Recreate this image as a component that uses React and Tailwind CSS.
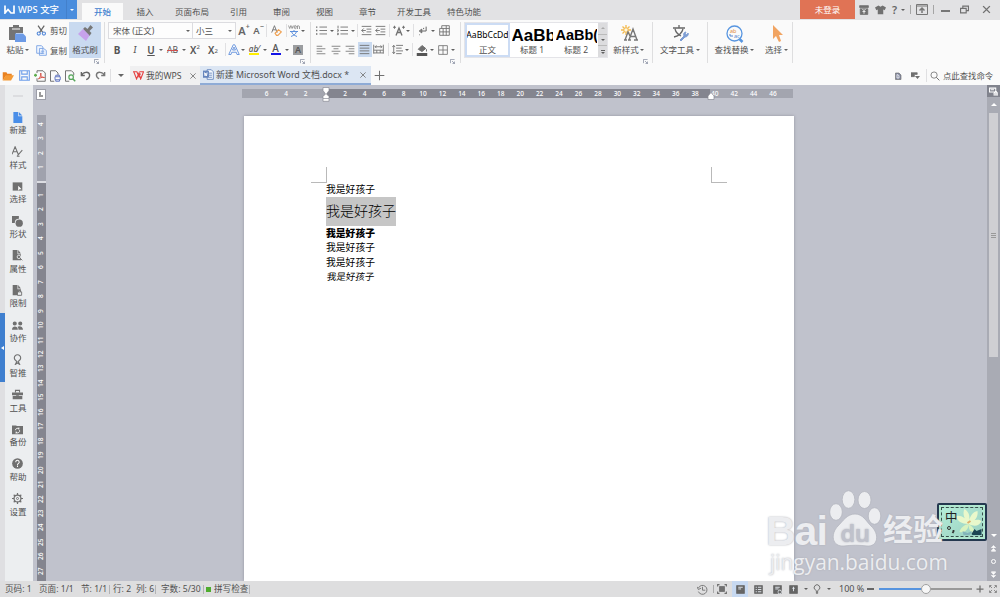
import React from 'react';

const menuTabs = [
  { name: '开始', width: 'w-[41px]', active: true },
  { name: '插入', width: 'w-[44px]' },
  { name: '页面布局', width: 'w-[50px]' },
  { name: '引用', width: 'w-[43px]' },
  { name: '审阅', width: 'w-[43px]' },
  { name: '视图', width: 'w-[43px]' },
  { name: '章节', width: 'w-[43px]' },
  { name: '开发工具', width: 'w-[50px]' },
  { name: '特色功能', width: 'w-[50px]' },
];

function Icon({ size = 14, className = 'text-[#707070]', children }) {
  return (
    <svg
      width={size}
      height={size}
      viewBox="0 0 16 16"
      fill="none"
      stroke="currentColor"
      strokeWidth="1.3"
      className={`shrink-0 ${className}`}
    >
      {children}
    </svg>
  );
}

function Caret({ className = 'w-[6px]' }) {
  return (
    <span className={`flex shrink-0 items-center justify-center ${className}`}>
      <span className="border-x-2 border-t-[2.5px] border-x-transparent border-t-[#606060]" />
    </span>
  );
}

function Cell({ className, children }) {
  return <span className={`flex shrink-0 items-center justify-center ${className}`}>{children}</span>;
}

function Sep({ className = 'w-[6px]' }) {
  return (
    <span className={`flex shrink-0 justify-center ${className}`}>
      <span className="h-[13px] w-px bg-[#e0e0e2]" />
    </span>
  );
}

function Divider() {
  return <div className="mt-[2px] h-[41px] w-px shrink-0 bg-[#dededf]" />;
}

function Launcher() {
  return (
    <svg width="5" height="5" viewBox="0 0 6 6" fill="none" stroke="#8d93a5" className="shrink-0">
      <path d="M.5 5V.5H5.5M3 5.5H5.5V3M2.5 2.5l3 3" />
    </svg>
  );
}

function Logo({ size, color }) {
  return (
    <svg width={size} height={size * 0.8} viewBox="0 0 20 16" fill="none" stroke={color} strokeWidth="2" className="shrink-0">
      <path d="M0 1.500h7l4 9 2.500-6M1.500 1.500l5 13 4.500-11 3 11 5-13h-7" />
    </svg>
  );
}

function TitleBar() {
  return (
    <header className="flex h-[20px] shrink-0 items-start bg-[#e2e2e4]">
      <div className="flex h-[19px] w-[77px] shrink-0 items-center bg-[#4a8ddd] text-[9.4px] font-medium text-white">
        <svg width="11" height="9" viewBox="0 0 22 18" fill="none" stroke="white" strokeWidth="3.4" className="ml-[4px]">
          <path d="M2 1v15l6-7 6 7h6V1" />
        </svg>
        <span className="ml-[3px] w-[47px] whitespace-nowrap">WPS 文字</span>
        <span className="ml-[1px] flex h-full w-[11px] items-center justify-center border-l border-[#4380cb]">
          <span className="border-x-2 border-t-[2.5px] border-x-transparent border-t-white" />
        </span>
      </div>
      <nav className="ml-[5px] flex h-[20px] items-end">
        {menuTabs.map((tab) => (
          <span
            key={tab.name}
            className={`flex h-[17px] items-center justify-center whitespace-nowrap ${tab.width} ${
              tab.active ? 'bg-[#fafafa] font-medium text-[#4180cf]' : 'text-[#505050]'
            }`}
          >
            {tab.name}
          </span>
        ))}
      </nav>
      <div className="ml-auto flex h-[19px] w-[200px] shrink-0 items-center">
        <span className="flex h-full w-[55px] items-center justify-center bg-[#e07355] text-white">未登录</span>
        <Cell className="w-[18px]">
          <Icon size={10}>
            <path d="M1 1h14v3H1zM2 6h12v9H2z" fill="currentColor" />
            <path d="M5 6l3 3 3-3M8 9v5M5.500 10.500h5" stroke="white" />
          </Icon>
        </Cell>
        <Cell className="w-[15px]">
          <Icon size={11}>
            <path d="M5 2l3 2 3-2 5 3-2 4-2-1v7H4V8L2 9 0 5z" fill="currentColor" stroke="none" />
          </Icon>
        </Cell>
        <Cell className="w-[13px] text-[11px] font-semibold text-[#666]">?</Cell>
        <Caret className="-ml-[1px] w-[5px]" />
        <span className="ml-[5px] h-[9px] w-px bg-[#a5a5a5]" />
        <Cell className="w-[22px]">
          <svg width="12" height="11" viewBox="0 0 24 22" fill="none" stroke="#777" strokeWidth="2">
            <path d="M1 1h22v20H1zM1 4h22" />
            <path d="M12 18V8M7 13l5-5 5 5" strokeWidth="3" />
          </svg>
        </Cell>
        <span className="h-[9px] w-px bg-[#a5a5a5]" />
        <span className="ml-[7px] mt-[3px] h-[1.5px] w-[9px] bg-[#777]" />
        <Cell className="ml-[5px] w-[18px]">
          <Icon size={9}>
            <path d="M1 6h10v8H1zM5 6V2h10v8h-4" strokeWidth="2" />
          </Icon>
        </Cell>
        <Cell className="ml-[4px] w-[19px]">
          <Icon size={9}>
            <path d="M2 2l12 12M14 2L2 14" strokeWidth="2.500" />
          </Icon>
        </Cell>
      </div>
    </header>
  );
}

function ClipboardGroup() {
  return (
    <div className="flex h-full w-[104px] shrink-0">
      <div className="flex w-[36px] flex-col items-center">
        <svg width="18" height="18" viewBox="0 0 18 18" className="mt-[5px]">
          <path d="M0 2h4V0h6v2h4v6H7v7H0z" fill="#747474" />
          <path d="M3 4h8" stroke="#fafafa" />
          <path d="M6 8.500h8l3 3V17H6z" fill="#6d9be6" />
        </svg>
        <span className="mt-[1px] flex h-[12px] items-center">
          粘贴
          <Caret className="ml-[1px] w-[5px]" />
        </span>
      </div>
      <div className="flex w-[33px] flex-col">
        <span className="mt-[4px] flex h-[13px] items-center gap-[3px] whitespace-nowrap">
          <Icon size={11} className="text-[#666]">
            <path d="M3 1l7 10M12 1L5 11" strokeWidth="1.800" />
            <circle cx="4" cy="12.500" r="2.300" stroke="#5b8edb" strokeWidth="1.700" />
            <circle cx="11.500" cy="12.500" r="2.300" stroke="#5b8edb" strokeWidth="1.700" />
          </Icon>
          剪切
        </span>
        <span className="mt-[7px] flex h-[13px] items-center gap-[3px] whitespace-nowrap">
          <Icon size={11} className="text-[#7ba3e4]">
            <path d="M1 1h7l2 2v9H1zM5 5h6l4 3v7H5z" fill="#f2f7ff" />
            <path d="M7 9h5M7 12h5" />
          </Icon>
          复制
        </span>
      </div>
      <div className="mt-[2px] flex h-[36px] w-[32px] shrink-0 flex-col items-center bg-[#c9daf0]">
        <svg width="17" height="17" viewBox="0 0 17 17" className="mt-[3px]">
          <path d="M6 4l2-2 2.500 2 3-4L16 2.500 12.500 6l2 2-2 3z" fill="#777" />
          <path d="M6 4l6.500 6.500L9 16 1 9z" fill="#c7a2ec" />
        </svg>
        <span className="mt-[2px] h-[12px] whitespace-nowrap leading-[12px]">格式刷</span>
      </div>
      <div className="-ml-[7px] mt-[39px]">
        <Launcher />
      </div>
    </div>
  );
}

function FontGroup() {
  return (
    <div className="flex h-full w-[205px] shrink-0 flex-col pl-[3px]">
      <div className="mt-[2px] flex h-[17px] items-center">
        <div className="flex h-[17px] w-[128px] shrink-0 items-center border border-[#dcdce0] bg-[#fdfdfd]">
          <span className="w-[75px] whitespace-nowrap pl-[4px]">宋体 (正文)</span>
          <Caret className="w-[8px]" />
          <span className="h-full w-px bg-[#dcdce0]" />
          <span className="w-[34px] pl-[3px]">小三</span>
          <Caret className="w-[6px]" />
        </div>
        <Cell className="w-[16px] text-[11px] font-semibold text-[#666]">
          A<sup className="text-[7px]">+</sup>
        </Cell>
        <Cell className="w-[13px] text-[9.500px] font-semibold text-[#666]">
          A<sup className="text-[7px]">−</sup>
        </Cell>
        <Sep className="w-[3px]" />
        <Cell className="w-[17px]">
          <Icon size={11}>
            <path d="M1 11L5 1l4 10M2.500 7h5" />
            <path d="M6 12l5-5 4 3-5 5H8z" stroke="#efa050" strokeWidth="1.700" />
          </Icon>
        </Cell>
        <Sep className="w-[3px]" />
        <Cell className="w-[12px] flex-col">
          <svg width="12" height="13" viewBox="0 0 12 13" fill="none">
            <path d="M.5 1.500l1.200 3 1.200-3 1.200 3 1.200-3M6 3h2.500c0-2-2.500-2-2.500 0 0 2 2 2 2.500 1M9.500 5V1.500M9.500 2.500c.5-1 2-1 2 .5v2" stroke="#888" strokeWidth=".8" />
            <path d="M2 7.500h8M6 6v1.500M3.500 7.500c.5 2.500 3 4 5.500 5M8.500 7.500C8 10 5.500 11.500 3 12.500" stroke="#5b8edb" strokeWidth="1" />
          </svg>
        </Cell>
        <Caret />
      </div>
      <div className="mt-[2px] flex h-[17px] items-center text-[10px] text-[#555]">
        <Cell className="w-[18px] font-bold">B</Cell>
        <Cell className="w-[18px] font-serif italic">I</Cell>
        <Cell className="w-[14px] font-semibold underline">U</Cell>
        <Caret />
        <Cell className="w-[17px] text-[8.5px] line-through decoration-[#d05050]">AB</Cell>
        <Caret className="w-[5px]" />
        <Cell className="w-[18px]">
          <span className="font-semibold">X</span>
          <sup className="text-[6px]">2</sup>
        </Cell>
        <Cell className="w-[18px]">
          <span className="font-semibold">X</span>
          <sub className="text-[6px]">2</sub>
        </Cell>
        <Sep />
        <Cell className="w-[11px]">
          <Icon size={12} className="text-[#6c98df]">
            <path d="M1 14L7 1h2l6 13h-3l-1-3H5l-1 3zM6 8h4L8 4z" />
          </Icon>
        </Cell>
        <Caret className="w-[7px]" />
        <Cell className="w-[16px] flex-col text-[8px] leading-[8px]">
          <span className="font-medium italic">ab⁄</span>
          <span className="h-[2px] w-[10px] bg-[#ffee00]" />
        </Cell>
        <Caret className="w-[5px]" />
        <Cell className="w-[17px] flex-col leading-[9px]">
          <span className="font-medium">A</span>
          <span className="h-[2px] w-[10px] bg-[#1414e6]" />
        </Cell>
        <Caret className="w-[5px]" />
        <Cell className="ml-[4px] h-[10px] w-[10px] bg-[#9b9da0] text-[9px] font-semibold">A</Cell>
      </div>
      <div className="ml-[192px] mt-[1px] flex h-[5px] items-start">
        <Launcher />
      </div>
    </div>
  );
}

const alignments = [
  { name: 'left', d: 'M1 2h9M1 6h14M1 10h9M1 14h14' },
  { name: 'center', d: 'M1 2h14M4 6h8M1 10h14M4 14h8' },
  { name: 'right', d: 'M1 2h14M6 6h9M1 10h14M6 14h9' },
];

function ParagraphGroup() {
  return (
    <div className="flex h-full w-[149px] shrink-0 flex-col pl-[3px]">
      <div className="mt-[2px] flex h-[17px] items-center">
        <Cell className="w-[14px]">
          <Icon size={11}>
            <path d="M5 3h11M5 8h11M5 13h11" />
            <path d="M0 3h2M0 8h2M0 13h2" strokeWidth="2" />
          </Icon>
        </Cell>
        <Caret className="w-[7px]" />
        <Cell className="w-[14px]">
          <Icon size={11}>
            <path d="M5 3h11M5 8h11M5 13h11M1.500 1v4M0 7h2v2H0M0 12h2v2H0" />
          </Icon>
        </Cell>
        <Caret className="w-[7px]" />
        <Sep className="w-[3px]" />
        <Cell className="w-[14px]">
          <Icon size={11}>
            <path d="M1 2h14M8 6h7M8 10h7M1 14h14M7 8H1M4 5L1 8l3 3" />
          </Icon>
        </Cell>
        <Cell className="w-[14px]">
          <Icon size={11}>
            <path d="M1 2h14M8 6h7M8 10h7M1 14h14M7 8H1M4 5L1 8l3 3" />
          </Icon>
        </Cell>
        <Sep className="w-[4px]" />
        <Cell className="w-[15px]">
          <Icon size={12}>
            <path d="M4 14L8 4l4 10M5.500 10h5" strokeWidth="1.800" />
            <path d="M0 3h4M2 1v4M12 3h4M14 1v4" />
          </Icon>
        </Cell>
        <Caret className="w-[4px]" />
        <Sep className="w-[7px]" />
        <Cell className="w-[12px]">
          <Icon size={10} className="text-[#666]">
            <path d="M13 1v7H8M6 5v6L2 8zM3 8h5M9 3v2M2 14h1" strokeWidth="1.600" />
          </Icon>
        </Cell>
        <Caret className="w-[8px]" />
        <Cell className="w-[14px]">
          <Icon size={11}>
            <path d="M4 1h11v14H1V5h14M1 10h14M6 5v10M10.500 1v14M4 1v4" />
          </Icon>
        </Cell>
      </div>
      <div className="mt-[2px] flex h-[17px] items-center">
        {alignments.map((item) => (
          <Cell key={item.name} className="w-[14.6px]">
            <Icon size={10}>
              <path d={item.d} />
            </Icon>
          </Cell>
        ))}
        <Cell className="h-[15px] w-[14px] bg-[#c9daf0]">
          <Icon size={11}>
            <path d="M1 2h14M1 6h14M1 10h14M1 14h14" />
          </Icon>
        </Cell>
        <Cell className="w-[14px]">
          <Icon size={11}>
            <path d="M1 1v13M15 1v13M3 4h10M5 2L3 4l2 2M11 2l2 2-2 2M1 9h14M1 13h14M5.500 9v4M10.500 9v4" />
          </Icon>
        </Cell>
        <Sep className="w-[5px]" />
        <Cell className="w-[13px]">
          <Icon size={11}>
            <path d="M6 2h10M6 6h8M6 10h10M6 14h8M2.500 2v12M.5 4.500L2.500 2l2 2.500M.5 11.500L2.500 14l2-2.500" />
          </Icon>
        </Cell>
        <Caret className="w-[6px]" />
        <Sep className="w-[6px]" />
        <Cell className="w-[12px]">
          <Icon size={12}>
            <path d="M3 7l5-5 5 4-5 4z" fill="currentColor" />
            <path d="M14 7v3" />
            <path d="M1 14h14" stroke="#555" strokeWidth="4" />
          </Icon>
        </Cell>
        <Caret className="w-[8px]" />
        <Cell className="w-[14px]">
          <Icon size={10}>
            <path d="M1 1h14v14H1zM8 1v14M1 8h14" />
          </Icon>
        </Cell>
        <Caret />
      </div>
      <div className="ml-[136px] mt-[1px] flex h-[5px] items-start">
        <Launcher />
      </div>
    </div>
  );
}

function StyleGallery() {
  return (
    <div className="flex h-full w-[191px] shrink-0 pl-[3px]">
      <div className="mt-[2px] flex h-[36px] w-[144px] shrink-0 border border-[#e4e4e8] bg-white">
        <div className="flex w-[45px] shrink-0 flex-col items-center overflow-hidden border-2 border-[#ccdcf4]">
          <span className="mt-[4px] h-[13px] whitespace-nowrap text-[8.600px] leading-[13px] text-black">AaBbCcDd</span>
          <span className="mt-[2px] leading-[12px]">正文</span>
        </div>
        <div className="flex w-[44px] shrink-0 flex-col items-center overflow-hidden pt-[3px]">
          <span className="h-[17px] w-[41px] overflow-hidden whitespace-nowrap font-['Liberation_Sans'] text-[17px] font-bold leading-[19px] text-black">
            AaBb
          </span>
          <span className="mt-[1px] leading-[12px]">标题 1</span>
        </div>
        <div className="flex w-[44px] shrink-0 flex-col items-center overflow-hidden pt-[3px]">
          <span className="h-[17px] w-[41px] overflow-hidden whitespace-nowrap font-['Liberation_Sans'] text-[14.500px] font-bold leading-[19px] text-black">
            AaBb(
          </span>
          <span className="mt-[1px] leading-[12px]">标题 2</span>
        </div>
        <div className="flex w-[9px] flex-col divide-y divide-[#bbb] bg-[#dcdcde]">
          <Cell className="flex-1">
            <span className="border-x-2 border-b-2 border-x-transparent border-b-[#aaa]" />
          </Cell>
          <Caret className="flex-1" />
          <span className="flex flex-1 flex-col items-center justify-center gap-[1px]">
            <span className="h-px w-[4px] bg-[#606060]" />
            <span className="border-x-2 border-t-2 border-x-transparent border-t-[#606060]" />
          </span>
        </div>
      </div>
      <div className="flex w-[42px] shrink-0 flex-col items-center">
        <svg width="17" height="17" viewBox="0 0 17 17" fill="none" className="mt-[5px]">
          <path d="M5 0v10M0 5h10M1.500 1.500l7 7M8.500 1.500l-7 7" stroke="#f3ba50" strokeWidth="1.300" />
          <circle cx="5" cy="5" r="2.200" fill="#fff7df" stroke="#f3ba50" />
          <path d="M4 15l3-8 2 4M8 15l4-11 4 11M9.500 11.500h5M3 15h3M7 15h3M13 15h4" stroke="#777" strokeWidth="1.400" />
        </svg>
        <span className="mt-[2px] flex h-[12px] items-center whitespace-nowrap">
          新样式
          <Caret className="ml-[1px] w-[5px]" />
        </span>
        <span className="ml-[33px] mt-[3px]">
          <Launcher />
        </span>
      </div>
    </div>
  );
}

function BigButton({ label, className, children }) {
  return (
    <div className={`flex shrink-0 flex-col items-center ${className}`}>
      <div className="mt-[4px] flex h-[19px] items-center">{children}</div>
      <span className="mt-[1px] flex h-[12px] items-center whitespace-nowrap">
        {label}
        <Caret className="ml-[1px] w-[5px]" />
      </span>
    </div>
  );
}

function Ribbon() {
  return (
    <section className="flex h-[46px] shrink-0 bg-[#fafafa]">
      <ClipboardGroup />
      <Divider />
      <FontGroup />
      <Divider />
      <ParagraphGroup />
      <Divider />
      <StyleGallery />
      <Divider />
      <BigButton label="文字工具" className="w-[54px]">
        <svg width="17" height="17" viewBox="0 0 17 17" fill="none">
          <path d="M1 3h12M7 0v3M3 4c1 4 4 6 6 7M11 4c-1 4-5 7-9 8" stroke="#666" strokeWidth="1.300" />
          <path d="M8 15l4-4c-1-2 0-4 2-4l-1 2 2 1 1-2c1 2-1 4-3 4l-4 4z" fill="#7e9ed4" stroke="#7e9ed4" />
        </svg>
      </BigButton>
      <Divider />
      <BigButton label="查找替换" className="w-[53px]">
        <svg width="18" height="18" viewBox="0 0 18 18" fill="none">
          <circle cx="8.500" cy="8.500" r="7.500" stroke="#5795e0" strokeWidth="1.300" />
          <path d="M13.500 14l3 3" stroke="#5795e0" strokeWidth="2.500" />
          <text x="4" y="8" fontSize="5.500" fill="#e28b42">ab</text>
          <text x="8" y="12.500" fontSize="5.500" fill="#5687d0">ac</text>
          <path d="M4 9v2h3" stroke="#5687d0" />
        </svg>
      </BigButton>
      <BigButton label="选择" className="w-[31px]">
        <svg width="12" height="17" viewBox="0 0 12 17" className="ml-[2px]">
          <path d="M1 0v14l3-3 3 6 2-1-2-6h4z" fill="#f1a462" />
        </svg>
      </BigButton>
      <Divider />
    </section>
  );
}

function QuickBar() {
  return (
    <section className="flex h-[19px] shrink-0 items-center bg-[#fafafa]">
      <Cell className="w-[16px]">
        <Icon size={12}>
          <path d="M1 14V3h5l1 2h6v3H5z" fill="#e98120" stroke="none" />
          <path d="M1 14l4-7h11l-4 7z" fill="#f49a36" stroke="none" />
        </Icon>
      </Cell>
      <Cell className="w-[16px]">
        <Icon size={11} className="text-[#6d9eea]">
          <path d="M1 1h14v14H1zM4 1v5h8V1M4 15v-5h8v5" strokeWidth="1.600" />
        </Icon>
      </Cell>
      <Cell className="w-[15px]">
        <Icon size={12}>
          <path d="M4 4V1h8l3 3v11H4v-4" />
          <path d="M6 12c3-3 4-7 3-8-1 3 1 6 5 6-4-1-6 1-8 2" stroke="#d65045" />
          <path d="M0 7h4M2 5v4" stroke="#5dad4c" strokeWidth="2" />
        </Icon>
      </Cell>
      <Cell className="w-[15px]">
        <Icon size={12}>
          <path d="M7 15H2V1h7l3 3v3" />
          <path d="M8 9h7v4H8zM9 9V7h5v2M9 13v2h5v-2" stroke="#6578c2" />
        </Icon>
      </Cell>
      <Cell className="w-[16px]">
        <Icon size={12}>
          <path d="M7 15H2V1h8l3 3v3" />
          <circle cx="9.500" cy="9.500" r="3" stroke="#56a55a" strokeWidth="1.600" />
          <path d="M12 12l3 3" stroke="#56a55a" strokeWidth="2" />
        </Icon>
      </Cell>
      <Cell className="w-[15px]">
        <Icon size={11} className="text-[#666]">
          <path d="M2 3v5h5M2 8c3-6 11-6 12-1 0 3-2 6-5 7" strokeWidth="2" />
        </Icon>
      </Cell>
      <Cell className="w-[15px]">
        <Icon size={11} className="text-[#777]">
          <path d="M14 3v5H9M14 8C11 2 3 2 2 7c0 3 2 5 4 6" strokeWidth="2" />
        </Icon>
      </Cell>
      <Sep className="w-[5px]" />
      <Cell className="w-[16px]">
        <span className="border-x-[3px] border-t-[3px] border-x-transparent border-t-[#666]" />
      </Cell>
      <div className="ml-[1px] flex h-full w-[70px] shrink-0 items-center bg-[#f0f0f1]">
        <span className="ml-[3px]">
          <Logo size={11} color="#e53e3e" />
        </span>
        <span className="ml-[2px] w-[41px] whitespace-nowrap text-[8.700px]">我的WPS</span>
        <CloseMark />
      </div>
      <div className="flex h-full w-[171px] shrink-0 items-center border-b-2 border-[#8eabd6] bg-[#dce6f3]">
        <Icon size={11} className="ml-[3px] text-[#6485bd]">
          <path d="M6 1h6l3 3v11H6zM8 6h5M8 9h5M8 12h5" fill="#f5f9ff" />
          <path d="M0 3h8v9H0z" fill="#6485bd" />
          <path d="M2 5l1 5 1-4 1 4 1-5" stroke="white" />
        </Icon>
        <span className="ml-[2px] w-[141px] whitespace-nowrap pt-[1px] text-[8.850px]">新建 Microsoft Word 文档.docx *</span>
        <CloseMark />
      </div>
      <Cell className="w-[17px]">
        <Icon size={11}>
          <path d="M8 1v14M1 8h14" strokeWidth="1.500" />
        </Icon>
      </Cell>
      <div className="ml-auto flex items-center">
        <Cell className="w-[16px]">
          <Icon size={8}>
            <path d="M3 2h7l4 4v9H3z" fill="#8288a0" />
            <path d="M6 5v7h4V7zM1 1v4" stroke="white" strokeWidth="1.500" />
          </Icon>
        </Cell>
        <Cell className="w-[18px]">
          <Icon size={9}>
            <path d="M0 3h11v3H6v4H0z" fill="currentColor" />
            <path d="M7 9h9l-4.500 5z" fill="currentColor" stroke="none" />
          </Icon>
        </Cell>
        <Sep className="w-[4px]" />
        <Cell className="w-[14px]">
          <Icon size={10}>
            <circle cx="6.500" cy="6.500" r="5" />
            <path d="M10 10l5 5" strokeWidth="1.600" />
          </Icon>
        </Cell>
        <span className="w-[58px] whitespace-nowrap pl-[1px] text-[8.400px]">点此查找命令</span>
      </div>
    </section>
  );
}

function CloseMark() {
  return (
    <Cell className="w-[12px]">
      <Icon size={6}>
        <path d="M1 1l14 14M15 1L1 15" strokeWidth="2.200" />
      </Icon>
    </Cell>
  );
}

const sideItems = [
  { name: '新建', icon: <path d="M2 0h7v6h6v10H2zM10 0l5 5h-5z" fill="#4a8ee8" stroke="none" /> },
  { name: '样式', icon: <path d="M0 12L4.500 1 9 12M2 8.500h5M8 14l7-8M7 15h4" strokeWidth="1.500" /> },
  {
    name: '选择',
    icon: (
      <>
        <path d="M1 2h14v12H1z" fill="currentColor" stroke="none" />
        <path d="M9 7v7l2-2h3z" fill="white" stroke="none" />
      </>
    ),
  },
  {
    name: '形状',
    icon: (
      <>
        <path d="M0 0h10v4c-4 0-6 2-6 6H0z" fill="currentColor" stroke="none" />
        <circle cx="10.500" cy="10.500" r="5.300" fill="currentColor" stroke="none" />
      </>
    ),
  },
  {
    name: '属性',
    icon: (
      <>
        <path d="M1 0h7v6h5v9H1zM9 0l4 5H9z" fill="currentColor" stroke="none" />
        <circle cx="10" cy="10" r="2.500" stroke="#eceef0" />
        <path d="M12 12l3 3" />
      </>
    ),
  },
  {
    name: '限制',
    icon: (
      <>
        <path d="M1 0h7v6h5v9H1zM9 0l4 5H9z" fill="currentColor" stroke="none" />
        <path d="M8 10h6v5H8zM9.500 10V8h3v2" fill="#eceef0" />
      </>
    ),
  },
  {
    name: '协作',
    icon: (
      <path
        d="M1 5a3 3 0 0 1 6 0a3 3 0 0 1-6 0M9 5a3 3 0 0 1 6 0a3 3 0 0 1-6 0M0 14c0-6 8.500-6 8.500 0zM9.500 14c0-2-.5-3-1.500-4C10 8 16 9 16 14z"
        fill="currentColor"
        stroke="none"
      />
    ),
  },
  {
    name: '智推',
    icon: <path d="M5.500 9.500a4.600 4.600 0 1 1 5 0L9 11l2 4-3-2-3 2 2-4z" strokeWidth="1.600" />,
  },
  {
    name: '工具',
    icon: (
      <>
        <path d="M0 5h16v4H0zM1 10h14v5H1z" fill="currentColor" stroke="none" />
        <path d="M5 5V2h6v3M6 10h4" strokeWidth="1.500" />
      </>
    ),
  },
  {
    name: '备份',
    icon: (
      <>
        <path d="M0 2h6l1 1h9v12H0z" fill="currentColor" stroke="none" />
        <path d="M5 9a3 3 0 0 1 5-2M11 9a3 3 0 0 1-5 3M10 5v3M6 11v3" stroke="white" />
      </>
    ),
  },
  {
    name: '帮助',
    icon: (
      <>
        <circle cx="8" cy="8" r="7.800" fill="currentColor" stroke="none" />
        <path d="M5.500 6c0-4 5-3 5 0 0 2-2.500 1.500-2.500 4M8 11v2" stroke="white" strokeWidth="1.500" />
      </>
    ),
  },
  {
    name: '设置',
    icon: (
      <>
        <circle cx="8" cy="8" r="5" strokeWidth="1.800" />
        <circle cx="8" cy="8" r="1.500" />
        <path d="M8 0v3M8 13v3M0 8h3M13 8h3M2.500 2.500l2 2M11.500 11.500l2 2M2.500 13.500l2-2M11.500 4.500l2-2" strokeWidth="1.800" />
      </>
    ),
  },
];

function SideBar() {
  return (
    <div className="flex shrink-0">
      <div className="flex w-[5px] flex-col bg-[#dfdfe2] pt-[228px]">
        <span className="flex h-[69px] items-center justify-center bg-[#3f7fcf]">
          <span className="border-y-2 border-r-[3px] border-y-transparent border-r-white" />
        </span>
      </div>
      <aside className="flex w-[28px] flex-col items-center bg-[#eceef0] pr-[2px]">
        <span className="mt-[10px] h-[2px] w-[10px] bg-[#dcdde0]" />
        <div className="mt-[13px] flex flex-col">
          {sideItems.map((item) => (
            <div key={item.name} className="flex h-[34.700px] flex-col items-center">
              <span className="flex h-[14px] items-center">
                <Icon size={11}>{item.icon}</Icon>
              </span>
              <span className="leading-[11px]">{item.name}</span>
            </div>
          ))}
        </div>
      </aside>
    </div>
  );
}

function VerticalRuler() {
  const bottom = Array.from({ length: 27 }, (_, i) => i + 1);
  return (
    <div className="flex w-[14px] shrink-0 flex-col items-center pl-[2px] text-[6.500px] font-medium text-white">
      <span className="mt-[4px] flex h-[11px] w-[10px] shrink-0 items-end justify-center border border-[#9c9ea8] bg-white pb-[2px]">
        <span className="h-[5px] w-[4px] border-b-2 border-l-2 border-[#999]" />
      </span>
      <div className="ml-[1px] mt-[15px] flex h-[66px] w-[9px] shrink-0 flex-col bg-[#a0a2ad] pt-[2px]">
        {[4, 3, 2, 1].map((n) => (
          <span key={n} className="flex h-[14.460px] -rotate-90 items-center justify-center">
            {n}
          </span>
        ))}
      </div>
      <span className="ml-[1px] h-[2px] w-[9px] shrink-0 bg-[#dcdde2]" />
      <div className="ml-[1px] flex min-h-0 w-[9px] flex-1 flex-col overflow-hidden bg-[#84858f] pt-[5px]">
        {bottom.map((n) => (
          <span key={n} className="flex h-[14.460px] shrink-0 -rotate-90 items-center justify-center">
            {n}
          </span>
        ))}
      </div>
    </div>
  );
}

function RulerMarks({ values }) {
  return values.map((n) => (
    <span key={n} className="w-[19.450px] shrink-0 text-center">
      {n}
    </span>
  ));
}

function HorizontalRuler() {
  const middle = Array.from({ length: 19 }, (_, i) => (i + 1) * 2);
  return (
    <div className="mt-[4px] flex h-[9px] w-[551px] shrink-0 text-[6.500px] font-medium leading-[9px] text-white">
      <div className="flex w-[84px] shrink-0 bg-[#a3a5af] pl-[15px]">
        <RulerMarks values={[6, 4, 2]} />
      </div>
      <div className="relative flex w-[384px] shrink-0 bg-[#84858f] pl-[9.500px]">
        <RulerMarks values={middle} />
        <svg width="8" height="15" viewBox="0 0 8 15" className="absolute -left-[4px] -top-[2px]" fill="white" stroke="#888a94" strokeWidth=".7">
          <path d="M1 .5h6v3L4.500 7 7 9.500v4.800H1V9.500L3.500 7 1 3.500zM1 11.500h6" />
        </svg>
        <svg width="8" height="8" viewBox="0 0 8 8" className="absolute -right-[5px] top-[3px]" fill="white" stroke="#888a94" strokeWidth=".7">
          <path d="M1 7.500V4l3-3.500L7 4v3.500z" />
        </svg>
      </div>
      <div className="flex w-[83px] shrink-0 bg-[#a3a5af]">
        <span className="-ml-[5px] flex">
          <RulerMarks values={[40, 42, 44, 46]} />
        </span>
      </div>
    </div>
  );
}

function DocumentPage() {
  return (
    <div className="ml-[1.500px] mt-[18px] flex min-h-0 w-[550px] flex-1 flex-col bg-white shadow-[0_0_3px_#92949e]">
      <div className="ml-[67px] mt-[51px] flex h-[16px] w-[416px] shrink-0 justify-between">
        <span className="flex w-[16px] flex-col justify-end border-b border-r border-[#b9b9b9]" />
        <span className="w-[16px] border-b border-l border-[#b9b9b9]" />
      </div>
      <div className="ml-[82.500px] flex flex-col items-start text-[9.800px] leading-[14px] text-black">
        <p className="h-[14px] leading-[14px]">我是好孩子</p>
        <p className="h-[29px] w-[70px] whitespace-nowrap bg-[#c6c6c6] text-[14px] font-light leading-[28px]">我是好孩子</p>
        <p className="h-[14px] font-black leading-[15px]">我是好孩子</p>
        <p className="h-[14.500px] leading-[15px]">我是好孩子</p>
        <p className="h-[14.500px] leading-[15px]">我是好孩子</p>
        <p className="h-[14px] -skew-x-6 pl-[1px] text-[9.500px] leading-[15px]">我是好孩子</p>
      </div>
    </div>
  );
}

function ScrollBar() {
  return (
    <div className="flex w-[13px] shrink-0 flex-col items-center bg-[#a9abb4]">
      <span className="flex h-[12px] w-full shrink-0 items-center justify-center bg-[#81838d]">
        <Icon size={9} className="text-white">
          <path d="M1 2h11v7H1zM3 5h6M9 11l3-4 3 4zM8 14h8" strokeWidth="1.800" />
        </Icon>
      </span>
      <span className="mt-[6px] border-x-[3px] border-b-[3px] border-x-transparent border-b-white" />
      <span className="mt-[7px] flex h-[244px] w-[9px] flex-col items-center justify-center gap-[1px] bg-[#cfcfd3]">
        <span className="h-px w-[5px] bg-[#999]" />
        <span className="h-px w-[5px] bg-[#999]" />
        <span className="h-px w-[5px] bg-[#999]" />
      </span>
      <span className="mt-auto border-x-[3px] border-t-[3px] border-x-transparent border-t-white" />
      <Icon size={7} className="mt-[8px] text-white">
        <path d="M8 1l5 5H3zM8 8l5 5H3zM3 15h10" fill="white" />
      </Icon>
      <span className="mt-[7px] h-[5px] w-[5px] rounded-full border border-white" />
      <Icon size={7} className="mb-[3px] mt-[7px] text-white">
        <path d="M8 8L3 3h10zM8 15l-5-5h10zM3 1h10" fill="white" />
      </Icon>
    </div>
  );
}

function Watermark() {
  return (
    <div className="absolute left-[766px] top-[488px] flex w-[184px] flex-col text-[#ecedf0] [text-shadow:0_0_2px_#a9abb4]">
      <div className="flex h-[60px] items-start">
        <span className="mt-[21px] w-[62px] shrink-0 font-['Liberation_Sans'] text-[41px] font-bold leading-[44px] tracking-[-1px]">
          Bai
        </span>
        <svg width="54" height="60" viewBox="0 0 54 60" fill="#ecedf0" stroke="#b4b6bf" strokeWidth=".8" className="shrink-0">
          <ellipse cx="8" cy="24" rx="6.300" ry="8.300" />
          <ellipse cx="20.500" cy="11.500" rx="6.300" ry="8.800" />
          <ellipse cx="36.500" cy="12" rx="6.500" ry="8.500" />
          <ellipse cx="46.500" cy="28" rx="6.300" ry="8.300" />
          <path d="M27 26c8 0 11 7 16 12 9 8 7 21-4 20-8-1-15-1-23 0C4 59 2 46 10 38c5-5 9-12 17-12z" />
          <text x="27" y="53.500" textAnchor="middle" fontSize="24" fontWeight="600" letterSpacing="-.5" fill="#c0c2cc" stroke="none">
            du
          </text>
        </svg>
        <span className="ml-[1px] mt-[20px] whitespace-nowrap font-['Noto_Sans_CJK_SC'] text-[30px] font-bold leading-[38px]">经验</span>
      </div>
      <span className="ml-[4px] mt-[2px] whitespace-nowrap font-['Open_Sans'] text-[20.900px] leading-[24px]">jingyan.baidu.com</span>
    </div>
  );
}

function InputMethod() {
  return (
    <div className="absolute left-[937px] top-[503px] flex h-[38px] w-[50px] overflow-hidden rounded-[2px] border-2 border-[#24384f] bg-[#b0e8cf] p-[2px]">
      <div className="relative flex w-full flex-col border border-dashed border-[#38504c] bg-gradient-to-br from-[#b4edd8] to-[#9acfc0] pl-[3px]">
        <svg width="27" height="28" viewBox="0 0 26 28" className="absolute right-0 top-0">
          <path d="M13 16C8 10 7 5 9 1c5 3 6 8 4 15zM13 16C14 8 17 4 22 3c1 6-3 11-9 13zM13 16C6 16 2 13 0 8c6-1 11 2 13 8zM13 16c5-5 10-5 13-3-2 5-7 6-13 3z" fill="#e9f8cb" />
          <path d="M13 16c-5 1-8 4-9 8 5 1 9-2 9-8zM13 16c4 2 6 5 6 9-4 0-6-4-6-9z" fill="#d8f3c0" />
          <path d="M12 15l3-2" stroke="#dfae6b" strokeWidth="2" />
          <path d="M16 26l3-5 2 2 5-2v6H17z" fill="#1d4653" />
          <path d="M7 23l5 2 5-2-3 4H8z" fill="#6f9cb0" opacity=".6" />
        </svg>
        <span className="relative mt-[3px] text-[12.500px] leading-[13px] text-[#222]">中</span>
        <svg width="12" height="9" viewBox="0 0 12 9" fill="none" stroke="#333" className="relative mt-[1px]">
          <circle cx="4" cy="3" r="1.500" />
          <path d="M8.500 5v1.500l-1 1.500" strokeWidth="1.800" />
        </svg>
      </div>
    </div>
  );
}

function StatusBar() {
  return (
    <footer className="flex h-[16px] shrink-0 items-center whitespace-nowrap bg-[#dededf] text-[8.600px]">
      <span className="ml-[5px] w-[34px]">页码: 1</span>
      <span className="w-[42px]">页面: 1/1</span>
      <span className="w-[28px]">节: 1/1</span>
      <StatusSep />
      <span className="ml-[3px] w-[23px]">行: 2</span>
      <span className="w-[19px]">列: 6</span>
      <StatusSep />
      <span className="ml-[5px] w-[42px]">字数: 5/30</span>
      <StatusSep />
      <span className="ml-[2px] h-[5px] w-[5px] bg-[#4eac2e]" />
      <span className="ml-[3px] w-[35px]">拼写检查</span>
      <StatusSep />
      <div className="ml-auto flex items-center">
        <Icon size={11}>
          <path d="M2 6a6.500 6.500 0 1 1 0 5M0 4l2 4 4-2M8 4v5h4" />
        </Icon>
        <span className="ml-[5px] h-[8px] w-px bg-[#aaa]" />
        <Cell className="w-[15px]">
          <Icon size={10}>
            <path d="M4 4h8v8H4z" fill="currentColor" />
            <path d="M1 4V1h3M12 1h3v3M15 12v3h-3M4 15H1v-3" strokeWidth="1.800" />
          </Icon>
        </Cell>
        <Cell className="ml-[3px] h-[16px] w-[16px] bg-[#c7d9f1]">
          <PageIcon d="M4 4h8M4 7h5" />
        </Cell>
        <Cell className="w-[21px]">
          <PageIcon d="M3 4h2M7 4h6M3 8h2M7 8h6M3 12h2M7 12h6" />
        </Cell>
        <Cell className="w-[16px]">
          <PageIcon d="M4 4h8M4 7h6M9 12a3 3 0 0 1 6 0M15 13a3 3 0 0 1-6 0" />
        </Cell>
        <Cell className="w-[17px]">
          <PageIcon d="M8 4v7M6 6h4M7 4h2" />
        </Cell>
        <Caret className="ml-[1px] w-[5px]" />
        <Cell className="w-[18px]">
          <Icon size={10}>
            <path d="M5.500 9.500a4.500 4.500 0 1 1 5 0L9 11v4H7v-4z" strokeWidth="1.600" />
          </Icon>
        </Cell>
        <Caret className="w-[5px]" />
        <span className="ml-[8px] w-[28px] text-[9px]">100 %</span>
        <span className="h-[1.500px] w-[7px] bg-[#666]" />
        <span className="ml-[5px] h-[1.500px] w-[42px] bg-[#5794df]" />
        <span className="h-[10px] w-[10px] rounded-full border border-[#a0a0a0] bg-[#f7f7f7]" />
        <span className="h-[1.500px] w-[41px] bg-[#999]" />
        <Cell className="w-[16px]">
          <Icon size={8}>
            <path d="M8 1v14M1 8h14" strokeWidth="2.500" />
          </Icon>
        </Cell>
        <Cell className="mr-[2px] w-[10px]">
          <Icon size={8}>
            <path d="M1 5V1h4M11 1h4v4M15 11v4h-4M5 15H1v-4M2 2l4 4M14 2l-4 4M2 14l4-4M14 14l-4-4" strokeWidth="1.500" />
          </Icon>
        </Cell>
      </div>
    </footer>
  );
}

function StatusSep() {
  return <span className="h-[9px] w-px shrink-0 bg-[#b3b3b5]" />;
}

function PageIcon({ d }) {
  return (
    <Icon size={9} className="text-[#666]">
      <path d="M1 1h14v14H1z" fill="currentColor" />
      <path d={d} stroke="#e8edf3" strokeWidth="1.600" />
    </Icon>
  );
}

export default function App() {
  return (
    <div className="relative flex h-[597px] w-[1000px] flex-col overflow-hidden bg-[#fafafa] font-['Noto_Sans','Noto_Sans_CJK_SC',sans-serif] text-[8.500px] leading-[12px] text-[#505050]">
      <TitleBar />
      <Ribbon />
      <QuickBar />
      <main className="flex min-h-0 flex-1 bg-[#c0c2cc]">
        <SideBar />
        <VerticalRuler />
        <div className="flex flex-1 flex-col overflow-hidden pl-[195px]">
          <HorizontalRuler />
          <DocumentPage />
        </div>
        <ScrollBar />
      </main>
      <StatusBar />
      <InputMethod />
      <Watermark />
    </div>
  );
}
